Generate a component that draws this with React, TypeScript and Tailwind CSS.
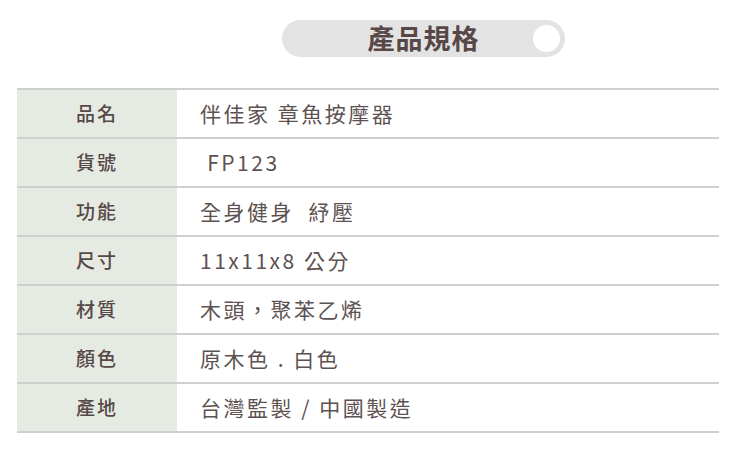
const rows: [string, string][] = [
  ["品名", "伴佳家 章魚按摩器"],
  ["貨號", " FP123"],
  ["功能", "全身健身  紓壓"],
  ["尺寸", "11x11x8 公分"],
  ["材質", "木頭，聚苯乙烯"],
  ["顏色", "原木色 . 白色"],
  ["產地", "台灣監製 / 中國製造"],
];

export default function App() {
  return (
    <div
      className="w-[750px] h-[459px] bg-white pt-[20px]"
      style={{ fontFamily: '"Noto Sans CJK TC", "Noto Sans", sans-serif' }}
    >
      <div className="ml-[282px] w-[283px] h-[37px] rounded-full bg-[#e3e3e3] flex items-center relative">
        <span className="flex-1 text-center text-[27px] font-bold text-[#574747] tracking-[1px]">產品規格</span>
        <span className="absolute right-[5px] top-[5px] w-[27px] h-[27px] rounded-full bg-white"></span>
      </div>
      <div className="ml-[17px] w-[702px] mt-[31px] border-t-2 border-[#cfcfcf]">
        {rows.map(([k, v]) => (
          <div key={k} className="flex h-[49px] border-b-2 border-[#cfcfcf]">
            <div className="w-[160px] bg-[#e5ebe2] flex items-center justify-center text-[19px] font-medium text-[#574848] tracking-[2px]">
              {k}
            </div>
            <div className="flex-1 flex items-center pl-[23px] text-[21px] text-[#5d5151] tracking-[2.5px] whitespace-pre">
              {v}
            </div>
          </div>
        ))}
      </div>
    </div>
  );
}
